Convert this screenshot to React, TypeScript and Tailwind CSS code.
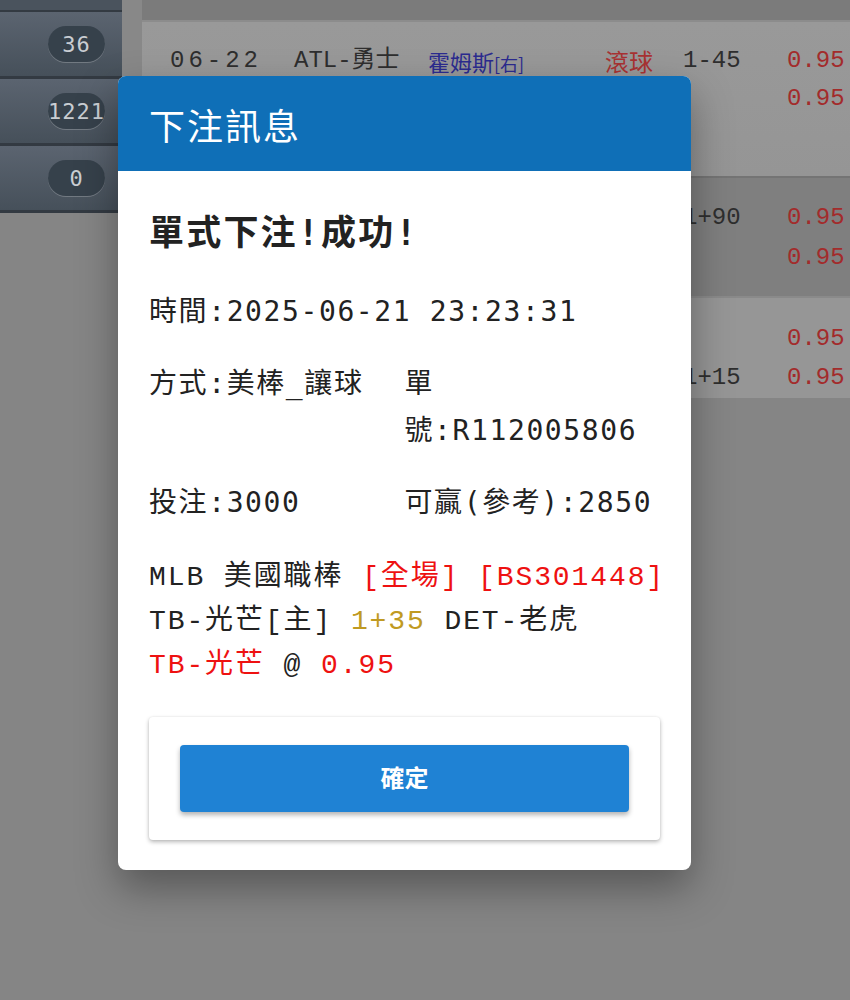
import React from "react";

const mono = { fontFamily: '"Liberation Mono", "Noto Sans CJK TC", monospace' };

function Badge({ n }: { n: string }) {
  return (
    <div className="flex h-[67px] items-center justify-end bg-gradient-to-b from-[#5b6470] to-[#46505a] pr-[17px] border-b-[3px] border-[#333a42]">
      <div
        className="flex h-[36px] w-[57px] items-center justify-center rounded-full bg-[#36414b] text-[22px] tracking-[1px] text-[#c9cdd2] shadow-[0_1px_0_rgba(255,255,255,0.22)] whitespace-nowrap"
        style={{ fontFamily: '"DejaVu Sans Mono", monospace' }}
      >
        {n}
      </div>
    </div>
  );
}

function Odds({ children, cls = "text-[#a32b2b]" }: { children: React.ReactNode; cls?: string }) {
  return <span className={cls}>{children}</span>;
}

export default function App() {
  return (
    <div
      className="relative h-[1000px] w-[850px] overflow-hidden bg-[#858585]"
      style={{ fontFamily: '"Noto Sans CJK TC", "Noto Sans", sans-serif' }}
    >
      {/* background page (dimmed) */}
      <div className="flex">
        <div className="w-[122px] flex flex-col">
          <div className="h-[12px] bg-[#4a535d] border-b-[2px] border-[#333a42]" />
          <Badge n="36" />
          <Badge n="1221" />
          <Badge n="0" />
        </div>
        <div className="w-[20px] bg-[#888888]" />
        <div className="flex-1 flex flex-col text-[24px] text-[#2e2e2e]" style={mono}>
          <div className="h-[22px] bg-[#7b7b7b] border-b-[2px] border-[#8c8c8c]" />
          <div className="h-[156px] bg-gradient-to-b from-[#999999] to-[#959595] border-b-[2px] border-[#747474] pt-[20px]">
            <div className="flex h-[38px] items-center whitespace-nowrap pl-[28px]">
              <span className="w-[124px] tracking-[4px]">06-22</span>
              <span className="w-[134px]">ATL-勇士</span>
              <span className="w-[177px] text-[22px] text-[#2b2b8f]" style={{ fontFamily: '"Noto Sans CJK TC", sans-serif' }}>
                霍姆斯<span className="text-[18px]">[右]</span>
              </span>
              <span className="w-[78px] text-[#a83232]" style={{ fontFamily: '"Noto Sans CJK TC", sans-serif' }}>滾球</span>
              <span className="w-[104px]">1-45</span>
              <Odds>0.95</Odds>
            </div>
            <div className="flex h-[38px] items-center whitespace-nowrap pl-[645px]">
              <Odds>0.95</Odds>
            </div>
          </div>
          <div className="h-[120px] bg-[#7f7f7f] border-b-[2px] border-[#8a8a8a] pt-[20px]">
            <div className="flex h-[40px] items-center whitespace-nowrap pl-[541px]">
              <span className="w-[104px]">1+90</span>
              <Odds>0.95</Odds>
            </div>
            <div className="flex h-[40px] items-center whitespace-nowrap pl-[645px]">
              <Odds>0.95</Odds>
            </div>
          </div>
          <div className="h-[100px] bg-[#969696] pt-[21px]">
            <div className="flex h-[39px] items-center whitespace-nowrap pl-[645px]">
              <Odds>0.95</Odds>
            </div>
            <div className="flex h-[39px] items-center whitespace-nowrap pl-[541px]">
              <span className="w-[104px]">1+15</span>
              <Odds>0.95</Odds>
            </div>
          </div>
        </div>
      </div>

      {/* modal dialog */}
      <div className="absolute left-[118px] top-[76px] w-[573px] overflow-hidden rounded-[8px] bg-white shadow-[0_18px_40px_rgba(0,0,0,0.35)]">
        <div className="flex h-[95px] items-center bg-[#0f6fb7] px-[31px] text-[36px] tracking-[2px] text-white">
          下注訊息
        </div>
        <div className="px-[31px] pt-[40px] pb-[30px] text-[#222222]">
          <div
            className="text-[35px] font-bold leading-[45px] tracking-[2.2px] whitespace-nowrap"
            style={{ fontFamily: '"DejaVu Sans Mono", "Noto Sans CJK TC", monospace' }}
          >
            單式下注!成功!
          </div>
          <div
            className="mt-[32px] flex flex-col gap-[25px] text-[28px] leading-[47px] tracking-[1.6px]"
            style={{ fontFamily: '"DejaVu Sans Mono", "Noto Sans CJK TC", monospace' }}
          >
            <div className="whitespace-nowrap">時間:2025-06-21 23:23:31</div>
            <div className="grid grid-cols-2">
              <div>方式:美棒_讓球</div>
              <div>單號:R112005806</div>
            </div>
            <div className="grid grid-cols-2">
              <div>投注:3000</div>
              <div className="whitespace-nowrap">可贏(參考):2850</div>
            </div>
          </div>
          <div className="mt-[30px] text-[28px] leading-[44px] tracking-[1.9px] whitespace-nowrap" style={mono}>
            <div>
              MLB 美國職棒 <span className="text-[#ee1111]">[全場]</span>{" "}
              <span className="text-[#ee1111]">[BS301448]</span>
            </div>
            <div>
              TB-光芒[主] <span className="text-[#c09a22]">1+35</span> DET-老虎
            </div>
            <div>
              <span className="text-[#ee1111]">TB-光芒</span> @ <span className="text-[#ee1111]">0.95</span>
            </div>
          </div>
          <div className="mt-[29px] rounded-[4px] bg-white px-[31px] py-[28px] shadow-[0_2px_4px_rgba(0,0,0,0.28),0_0_2px_rgba(0,0,0,0.08)]">
            <button className="flex h-[67px] w-full items-center justify-center rounded-[4px] bg-[#1f82d4] pb-[4px] text-[24px] font-bold text-white shadow-[0_3px_5px_rgba(0,0,0,0.3)]">
              確定
            </button>
          </div>
        </div>
      </div>
    </div>
  );
}
